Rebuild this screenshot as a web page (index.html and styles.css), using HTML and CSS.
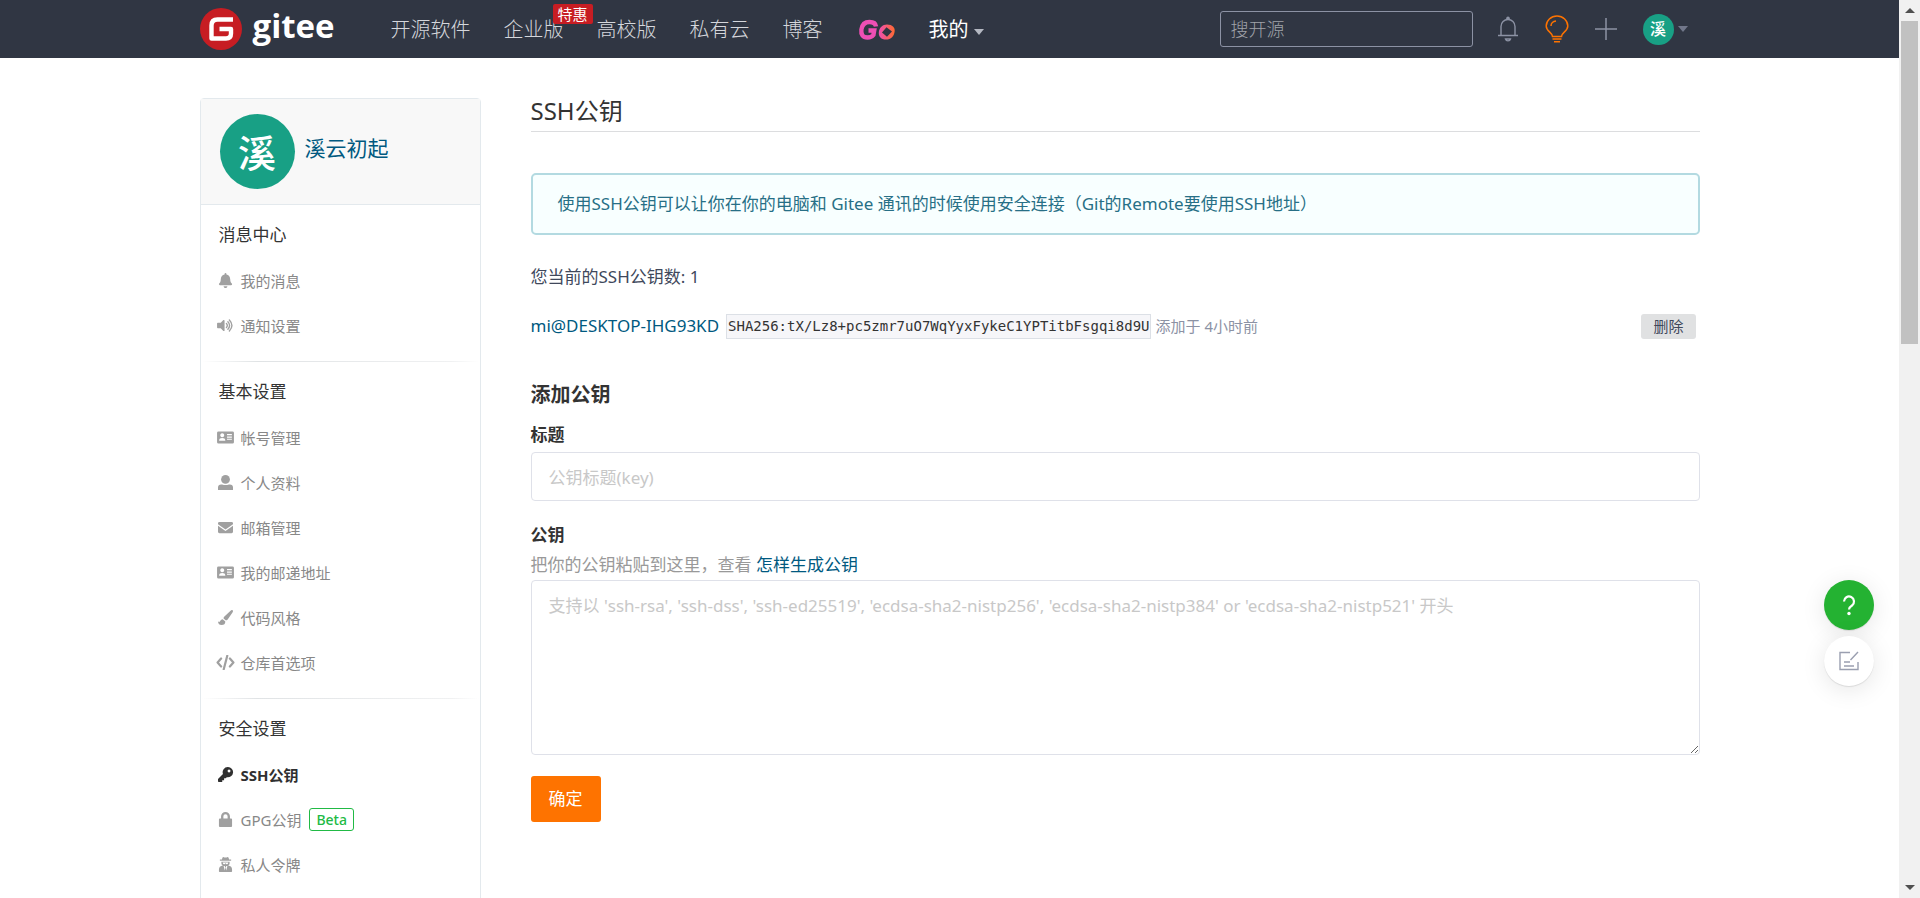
FILE: index.html
```html
<!DOCTYPE html>
<html lang="zh-CN">
<head>
<meta charset="utf-8">
<title>SSH公钥 - Gitee</title>
<link rel="stylesheet" href="styles.css">
</head>
<body>
<div class="window">
<div class="page">
  <header class="topbar">
    <div class="container topbar-inner">
      <a class="brand" href="#">
        <svg class="brand-mark" viewBox="0 0 42 42" aria-hidden="true"><circle cx="21" cy="21" r="21" fill="#c71d23"/><path d="M33 11.500H17.500Q11.500 11.500 11.500 17.500V30.500H26Q31 30.500 31 25.500V21H19.500" fill="none" stroke="#fff" stroke-width="4.400" stroke-linejoin="round"/></svg>
        <span class="brand-name">gitee</span>
      </a>
      <nav class="nav">
        <a href="#">开源软件</a>
        <a class="has-badge" href="#">企业版<span class="badge">特惠</span></a>
        <a href="#">高校版</a>
        <a href="#">私有云</a>
        <a href="#">博客</a>
        <a class="go" href="#" aria-label="Go"><svg viewBox="0 0 40 24" aria-hidden="true"><defs><linearGradient id="g" x1="0" x2="1"><stop offset="0" stop-color="#ee4fb4"/><stop offset="1" stop-color="#ff6a2e"/></linearGradient></defs><path d="M20 8.500Q19.500 4 13.500 4Q6.500 4 5.400 11.500Q4.500 19.500 11.500 19.500Q15.500 19.500 17.400 17L18.200 12.500H12.500" fill="none" stroke="#ee4fb4" stroke-width="4.400"/><path fill-rule="evenodd" fill="url(#g)" d="M31 6.500C36.500 6.500 39 9.500 38.700 13C38.300 18 35 21.600 30 21.600C25 21.600 22.500 18.500 22.800 14.500C23.200 9.500 26.500 6.500 31 6.500ZM30.500 9.300L26 14.500L31 18.800L36 13.500Z"/></svg></a>
        <a class="mine" href="#">我的<span class="caret"></span></a>
      </nav>
      <div class="tools">
        <input class="search" type="search" placeholder="搜开源" aria-label="搜开源">
        <button class="tool bell" aria-label="通知"><svg viewBox="0 0 22 26" aria-hidden="true"><path d="M4 19V10.500a7 7 0 0 1 14 0V19M1 19.500h20M8.500 23a2.600 2.600 0 0 0 5 0Z" fill="none" stroke="#8c92a4" stroke-width="1.400"/><circle cx="11" cy="2.300" r="1.800" fill="#8c92a4"/></svg></button>
        <button class="tool bulb" aria-label="建议"><svg viewBox="0 0 24 28" aria-hidden="true"><path d="M7.500 21.500C7.500 17.500 1.200 16.500 1.200 11a10.800 10 0 0 1 21.600 0C22.800 16.500 16.500 17.500 16.500 21.500ZM7.500 24h9M9 26.800h6M6 11a5.500 5 0 0 1 5-5" fill="none" stroke="#fe7300" stroke-width="1.500"/></svg></button>
        <button class="tool plus" aria-label="新建"><svg viewBox="0 0 22 22" aria-hidden="true"><path d="M11 0v22M0 11h22" stroke="#8c92a4" stroke-width="1.500"/></svg></button>
        <button class="user"><span class="avatar small">溪</span><span class="caret dim"></span></button>
      </div>
    </div>
  </header>

  <div class="container columns">
    <aside class="sidebar">
      <div class="profile"><span class="avatar">溪</span><a href="#">溪云初起</a></div>
      <section class="group">
        <h2>消息中心</h2>
        <ul>
          <li><a href="#"><svg viewBox="0 0 448 512" aria-hidden="true"><path d="M224 512c35 0 64-29 64-64H160c0 35 29 64 64 64zm215-150c-19-21-55-52-55-154 0-78-54-140-128-155V32a32 32 0 1 0-64 0v21C118 68 64 130 64 208c0 102-36 133-55 154-6 6-9 14-9 22 0 16 13 32 32 32h384c19 0 32-16 32-32 0-8-3-16-9-22z"/></svg>我的消息</a></li>
          <li><a href="#"><svg class="wide" viewBox="0 0 576 512" aria-hidden="true"><path d="M215 71l-89 89H24c-13 0-24 11-24 24v144c0 13 11 24 24 24h102l89 89c15 15 41 4 41-17V88c0-21-26-32-41-17z"/><path d="M320 190q60 66 0 132M370 130q115 126 0 252M420 70q175 186 0 372" fill="none" stroke="currentColor" stroke-width="46" stroke-linecap="round"/></svg>通知设置</a></li>
        </ul>
      </section>
      <section class="group">
        <h2>基本设置</h2>
        <ul>
          <li><a href="#"><svg class="wide" viewBox="-32 0 640 512" aria-hidden="true"><path fill-rule="evenodd" d="M48 50h480a48 48 0 0 1 48 48v316a48 48 0 0 1-48 48H48a48 48 0 0 1-48-48V98a48 48 0 0 1 48-48ZM176 115a68 68 0 1 0 1 0ZM70 370h212c0-80-40-100-106-100S70 290 70 370ZM340 140v42h165v-42ZM340 220v42h165v-42ZM340 300v30h165v-30Z"/></svg>帐号管理</a></li>
          <li><a href="#"><svg viewBox="0 0 512 512" aria-hidden="true"><ellipse cx="256" cy="150" rx="150" ry="150"/><path d="M0 512V430q0-110 110-110h30q116 50 232 0h30q110 0 110 110v82Z"/></svg>个人资料</a></li>
          <li><a href="#"><svg viewBox="0 0 512 512" aria-hidden="true"><path d="M48 64h416q48 0 48 48v30L256 322 0 142v-30q0-48 48-48ZM0 192l256 180 256-180v208q0 48-48 48H48q-48 0-48-48Z"/></svg>邮箱管理</a></li>
          <li><a href="#"><svg class="wide" viewBox="-32 0 640 512" aria-hidden="true"><path fill-rule="evenodd" d="M48 50h480a48 48 0 0 1 48 48v316a48 48 0 0 1-48 48H48a48 48 0 0 1-48-48V98a48 48 0 0 1 48-48ZM176 115a68 68 0 1 0 1 0ZM70 370h212c0-80-40-100-106-100S70 290 70 370ZM340 140v42h165v-42ZM340 220v42h165v-42ZM340 300v30h165v-30Z"/></svg>我的邮递地址</a></li>
          <li><a href="#"><svg viewBox="0 0 512 512" aria-hidden="true"><path d="M500 10q24 20 0 70L330 320q-40 48-70 28l-60-50q-26-26 10-70L420 30q46-38 80-20ZM160 318l90 74q0 120-130 120Q10 512 0 390q60 40 80-20 20-50 80-52Z"/></svg>代码风格</a></li>
          <li><a href="#"><svg class="wide" viewBox="0 0 640 512" aria-hidden="true"><path d="M170 120L50 256l120 136M470 120l120 136-120 136M380 25L260 487" fill="none" stroke="currentColor" stroke-width="76" stroke-linecap="round" stroke-linejoin="round"/></svg>仓库首选项</a></li>
        </ul>
      </section>
      <section class="group">
        <h2>安全设置</h2>
        <ul>
          <li><a class="active" href="#"><svg viewBox="0 0 512 512" aria-hidden="true"><path fill-rule="evenodd" d="M336 0a176 176 0 1 1-35 348l-37 36h-56v64h-64v64H24q-24 0-24-24v-80l170-170A176 176 0 0 1 336 0Zm40 88a48 48 0 1 0 1 0Z"/></svg>SSH公钥</a></li>
          <li><a href="#"><svg viewBox="0 0 448 512" aria-hidden="true"><path fill-rule="evenodd" d="M32 224h40v-76a152 148 0 0 1 304 0v76h40q32 0 32 32v224q0 32-32 32H32q-32 0-32-32V256q0-32 32-32Zm120 0h144v-76a72 70 0 0 0-144 0Z"/></svg>GPG公钥<span class="beta">Beta</span></a></li>
          <li><a href="#"><svg viewBox="0 0 448 512" aria-hidden="true"><path fill-rule="evenodd" d="M150 0q74 36 148 0 30 0 50 84h68v46H32V84h68Q120 0 150 0ZM84 160h280v60q0 50-50 72 134 12 134 140v56q0 24-24 24H24q-24 0-24-24v-56q0-128 134-140-50-22-50-72ZM130 190q0 56 45 56t45-44h8q0 44 45 44t45-56ZM160 310l40 150 18-100-22-50ZM288 310l-40 150-18-100 22-50Z"/></svg>私人令牌</a></li>
        </ul>
      </section>
    </aside>

    <main class="content">
      <h1>SSH公钥</h1>
      <p class="notice">使用SSH公钥可以让你在你的电脑和 Gitee 通讯的时候使用安全连接（Git的Remote要使用SSH地址）</p>
      <p class="count">您当前的SSH公钥数: 1</p>
      <div class="key">
        <a href="#">mi@DESKTOP-IHG93KD</a>
        <code>SHA256:tX/Lz8+pc5zmr7uO7WqYyxFykeC1YPTitbFsgqi8d9U</code>
        <span class="time">添加于 4小时前</span>
        <button class="delete" type="button">删除</button>
      </div>
      <form class="form">
        <h3>添加公钥</h3>
        <label for="title">标题</label>
        <input id="title" type="text" placeholder="公钥标题(key)">
        <label for="key">公钥</label>
        <p class="hint">把你的公钥粘贴到这里，查看 <a href="#">怎样生成公钥</a></p>
        <textarea id="key" placeholder="支持以 'ssh-rsa', 'ssh-dss', 'ssh-ed25519', 'ecdsa-sha2-nistp256', 'ecdsa-sha2-nistp384' or 'ecdsa-sha2-nistp521' 开头"></textarea>
        <button class="submit" type="button">确定</button>
      </form>
    </main>
  </div>

  <div class="floating">
    <button class="help" aria-label="帮助"><svg viewBox="0 0 24 24" aria-hidden="true"><path d="M7 8.500a5 5 0 1 1 8 4Q12 14.500 12 16.500" fill="none" stroke="#fff" stroke-width="2.200"/><circle cx="12" cy="20.500" r="1.700" fill="#fff"/></svg></button>
    <button class="feedback" aria-label="反馈"><svg viewBox="0 0 20 20" aria-hidden="true"><path d="M11 1.500H1V18.500H19V11M5 11h6M5 15h10M11.500 9L19 1" fill="none" stroke="#9a9fb0" stroke-width="1.400"/></svg></button>
  </div>
</div>
<div class="scrollbar" aria-hidden="true"><span class="arrow up"></span><span class="thumb"></span><span class="arrow down"></span></div>
</div>
</body>
</html>
```

FILE: styles.css
```css
* { box-sizing: border-box; }
body, h1, h2, h3, p, ul { margin: 0; padding: 0; }
body, input, textarea, button {
  font-family: "Noto Sans", "Noto Sans CJK SC", sans-serif;
  font-size: 17px;
  font-weight: 400;
}
body { color: #40485b; background: #fff; overflow: hidden; }
a { color: #005980; text-decoration: none; }
ul { list-style: none; }
button { border: 0; background: none; padding: 0; }

.window { display: grid; grid-template-columns: minmax(0, 1fr) 21px; height: 100vh; }
.page { position: relative; overflow: hidden; }
.container { width: 100%; max-width: 1500px; margin: 0 auto; }

.topbar { background: #303643; }
.topbar-inner { display: flex; align-items: center; height: 58px; }
.brand { display: flex; align-items: center; gap: 11px; width: 191px; }
.brand-mark { width: 42px; height: 42px; }
.brand-name {
  color: #fff;
  font-family: "Open Sans", sans-serif;
  font-size: 33px;
  font-weight: 700;
  line-height: 40px;
  padding-bottom: 6px;
}
.nav { display: flex; align-items: center; gap: 33px; }
.nav a { padding-top: 2px; color: #d5d7dc; font-size: 20px; font-weight: 300; line-height: 30px; white-space: nowrap; }
.has-badge { position: relative; }
.nav .badge {
  position: absolute;
  left: 49px;
  top: -9px;
  padding: 0 5px;
  border-radius: 2px;
  background: #c71d23;
  color: #fff;
  font-size: 15px;
  font-weight: 400;
  line-height: 20px;
}
.go svg { display: block; width: 40px; height: 24px; }
.nav .mine { display: flex; align-items: center; gap: 5px; color: #fff; font-weight: 400; }
.caret { border: 5px solid transparent; border-top: 6px solid #b4b8c2; border-bottom: 0; margin-top: 4px; }
.caret.dim { border-top-color: #71778a; margin-top: 0; }
.tools { display: flex; align-items: center; margin-left: auto; padding-right: 12px; }
.search {
  width: 253px;
  height: 36px;
  margin-right: 24px;
  padding: 0 10px;
  border: 1px solid #8c92a4;
  border-radius: 3px;
  background: transparent;
  color: #fff;
  font-size: 18px;
  font-weight: 300;
}
.search::placeholder { color: #a0a3aa; }
.tool svg { display: block; }
.bell svg { width: 22px; height: 26px; }
.bulb { margin: 0 26px; }
.bulb svg { width: 24px; height: 28px; }
.plus svg { width: 22px; height: 22px; }
.user { display: flex; align-items: center; gap: 4px; margin-left: 26px; }

.avatar {
  display: grid;
  place-items: center;
  flex: none;
  width: 75px;
  height: 75px;
  border-radius: 50%;
  background: #18a085;
  color: #fff;
  font-size: 38px;
  font-weight: 500;
  line-height: 1;
}
.avatar.small { width: 31px; height: 31px; font-size: 16px; }

.columns { display: grid; grid-template-columns: 281px minmax(0, 1fr); gap: 50px; padding-top: 40px; }
.sidebar { border: 1px solid #e3e9ed; border-radius: 4px; min-height: 1100px; }
.profile {
  display: flex;
  align-items: center;
  gap: 10px;
  padding: 15px 19px;
  border-bottom: 1px solid #e3e9ed;
  background: #f8f8f8;
}
.profile a { font-size: 21px; line-height: 30px; padding-bottom: 7px; }
.group { padding: 7px 0 13px; }
.group + .group::before {
  content: "";
  display: block;
  height: 1px;
  margin: -7px 1px 7px;
  background: linear-gradient(90deg, #fff, #e0e3e5 20%, #f0f1f2 90%, #fff);
}
.group h2 { padding-left: 18px; color: #333; font-size: 17px; font-weight: 400; line-height: 46px; }
.group li a { display: flex; align-items: center; height: 45px; padding-left: 15px; color: #888; font-size: 15px; }
.group svg { width: 19px; height: 15px; margin-right: 6px; fill: #a0a0a0; color: #a0a0a0; }
.group li .active { color: #303030; font-weight: 700; }
.group .active svg { fill: #303030; }
.beta {
  margin-left: 8px;
  padding: 0 6px;
  border: 1px solid #21ba45;
  border-radius: 3px;
  color: #21ba45;
  font-size: 14px;
  font-weight: 500;
  line-height: 21px;
}

h1 {
  padding-bottom: 7px;
  border-bottom: 1px solid #dcdddf;
  color: #333;
  font-size: 24px;
  font-weight: 400;
  line-height: 26px;
}
.notice {
  margin-top: 41px;
  padding: 16px 25px;
  border: 2px solid #b3dae1;
  border-radius: 5px;
  background: #f8ffff;
  color: #276f86;
  line-height: 26px;
}
.count { margin-top: 29px; line-height: 26px; }
.key { display: flex; align-items: center; margin-top: 23px; padding-right: 4px; line-height: 26px; }
.key code {
  margin: 0 4px 0 7px;
  padding: 0 1px;
  border: 1px solid #dce0e6;
  background: #f6f6f9;
  color: #333;
  font-family: "DejaVu Sans Mono", monospace;
  font-size: 14px;
  font-weight: 400;
  line-height: 23px;
}
.time { color: #8c92a4; font-size: 15px; }
.delete {
  margin-left: auto;
  padding: 0 12px;
  border-radius: 3px;
  background: #e0e1e2;
  color: #40485b;
  font-size: 15px;
  line-height: 25px;
}
.form { display: flex; flex-direction: column; margin-top: 40px; }
.form h3 { color: #333; font-size: 20px; font-weight: 700; line-height: 32px; }
.form label { margin-top: 11px; color: #333; font-weight: 700; line-height: 26px; }
.form input, .form textarea {
  width: 100%;
  padding: 11px 17px 9px;
  border: 1px solid #dfe1e9;
  border-radius: 4px;
  background: #fff;
  color: #40485b;
  line-height: 28px;
}
.form input { height: 49px; margin: 4px 0 10px; }
.form textarea { height: 175px; resize: vertical; }
.form ::placeholder { color: #c8c8c8; }
.hint { margin-top: 4px; padding-bottom: 2px; color: #999; line-height: 26px; }
.submit {
  align-self: flex-start;
  margin-top: 21px;
  padding: 10px 18px;
  border-radius: 3px;
  background: #fe7300;
  color: #fff;
  line-height: 26px;
}

.floating { position: absolute; right: 25px; top: 580px; display: grid; gap: 6px; }
.floating button {
  display: grid;
  place-items: center;
  width: 50px;
  height: 50px;
  border-radius: 50%;
  background: #fff;
  box-shadow: 0 1px 1px rgba(0, 0, 0, .1), 0 4px 24px rgba(0, 0, 0, .1);
}
.floating .help { background: #24b232; }
.help svg { width: 24px; height: 24px; }
.feedback svg { width: 20px; height: 20px; }

.scrollbar { display: flex; flex-direction: column; align-items: center; background: #f1f1f1; }
.arrow { display: grid; place-items: center; height: 21px; }
.arrow::before { content: ""; border: 5px solid transparent; }
.up::before { border-bottom-color: #505050; border-top: 0; }
.down { margin-top: auto; }
.down::before { border-top-color: #505050; border-bottom: 0; }
.thumb { width: 17px; height: 36%; background: #c1c1c1; }
```
